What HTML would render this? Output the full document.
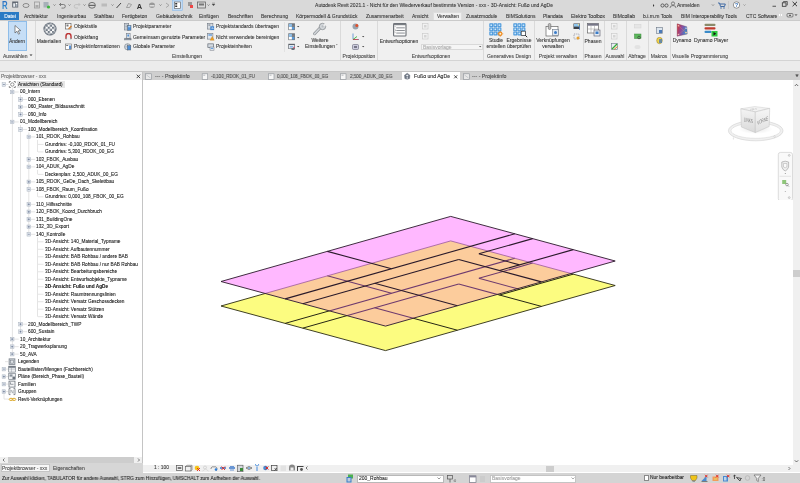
<!DOCTYPE html>
<html><head><meta charset="utf-8"><style>
html,body{margin:0;padding:0;width:800px;height:483px;overflow:hidden;background:#fff;position:relative}
.t{position:absolute;white-space:nowrap;font-family:"Liberation Sans",sans-serif;-webkit-text-stroke:0.08px currentColor;will-change:transform}
.r{position:absolute;display:block}
</style></head><body>
<div class="r" style="left:0px;top:0px;width:800px;height:20px;background:#d9d9d9;"></div>
<div class="r" style="left:0px;top:20px;width:800px;height:40px;background:#f0f0f0;"></div>
<div class="r" style="left:0px;top:19.5px;width:800px;height:0.5px;background:#cacaca;"></div>
<div class="r" style="left:0px;top:60px;width:800px;height:1px;background:#d4d4d4;"></div>
<div class="r" style="left:0px;top:61px;width:800px;height:10px;background:#ececec;"></div>
<div class="r" style="left:0px;top:71px;width:800px;height:1px;background:#c6c6c6;"></div>
<div class="t" style="left:283.50px;width:300px;text-align:center;top:3.17px;font-size:5px;line-height:5px;color:#333;">Autodesk Revit 2021.1 - Nicht für den Wiederverkauf bestimmte Version - xxx - 3D-Ansicht: Fußo und AgDe</div>
<div class="t" style="left:677.00px;top:3.17px;font-size:5px;line-height:5px;color:#333;">Anmelden</div>
<svg class="r" style="left:0px;top:-0.6px;" width="800" height="20" viewBox="0 0 800 20">
<defs><linearGradient id="rg" x1="0" y1="0" x2="0" y2="1"><stop offset="0" stop-color="#2a6cc0"/><stop offset="1" stop-color="#3a9ad8"/></linearGradient></defs><text x="0" y="0" font-family="Liberation Sans" font-weight="bold" font-size="10" fill="url(#rg)" transform="translate(2.1 9.9) scale(0.78 1.04)">R</text>
<rect x="12.2" y="2.5" width="6" height="6" fill="#5f6670"/><rect x="13.2" y="4.3" width="1.8" height="3.5" fill="#e8ecf0"/><rect x="15.5" y="4.3" width="2" height="3.5" fill="#aab2bb"/><circle cx="16.5" cy="4.5" r="0.8" fill="#fff"/>
<ellipse cx="26" cy="6.5" rx="3" ry="2" fill="none" stroke="#777" stroke-width="0.8"/>
<rect x="34.5" y="3" width="5" height="6" fill="none" stroke="#999" stroke-width="0.8"/><rect x="35.5" y="6" width="3" height="2.5" fill="#aaa"/>
<rect x="43.5" y="3" width="5" height="5.5" fill="#a7b0b8"/><circle cx="48.5" cy="8" r="1.6" fill="#3cb53c"/>
<path d="M53.5 5.5 l1 1 l1 -1" fill="none" stroke="#555" stroke-width="0.6"/>
<path d="M59.5 5.5 h4 a1.8 1.8 0 0 1 0 3.6 h-2 M59.5 5.5 l1.5 -1.5 M59.5 5.5 l1.5 1.5" fill="none" stroke="#666" stroke-width="0.8"/>
<path d="M68.5 5.5 l1 1 l1 -1" fill="none" stroke="#555" stroke-width="0.6"/>
<path d="M80 5.5 h-4 a1.8 1.8 0 0 0 0 3.6 h2 M80 5.5 l-1.5 -1.5 M80 5.5 l-1.5 1.5" fill="none" stroke="#bbb" stroke-width="0.8"/>
<path d="M83.5 5.5 l1 1 l1 -1" fill="none" stroke="#555" stroke-width="0.6"/>
<ellipse cx="92" cy="6.3" rx="3.4" ry="2.9" fill="none" stroke="#666" stroke-width="0.9"/><rect x="88.8" y="5.8" width="6.4" height="1.2" fill="#666"/>
<rect x="101.5" y="4.5" width="5.5" height="3" fill="#bbb"/>
<path d="M111.5 5.5 l1 1 l1 -1" fill="none" stroke="#555" stroke-width="0.6"/>
<path d="M116.5 9 l4.5 -5" stroke="#333" stroke-width="0.9"/>
<path d="M126.5 8.5 l2 -4 l3 1 l-2 3 z" fill="none" stroke="#888" stroke-width="0.7"/>
<text x="136.8" y="9.5" font-family="Liberation Sans" font-weight="bold" font-size="7.5" fill="#333">A</text>
<ellipse cx="152" cy="6.3" rx="3" ry="2.7" fill="#999"/><rect x="149.5" y="6" width="5" height="1.5" fill="#ddd"/>
<path d="M159.5 5.5 l1 1 l1 -1" fill="none" stroke="#555" stroke-width="0.6"/>
<path d="M166 4 l3 2.3 l-3 2.3" fill="none" stroke="#999" stroke-width="0.8"/>
<rect x="172.5" y="1" width="10" height="10.5" fill="#c3dcf5" stroke="#7eb4ea" stroke-width="0.5"/>
<rect x="174.5" y="3" width="6" height="6.5" fill="#fff" stroke="#555" stroke-width="0.6"/><rect x="175.2" y="4" width="2" height="1.5" fill="#333"/><rect x="175.2" y="6.5" width="2" height="1.5" fill="#333"/>
<rect x="188" y="3" width="4" height="4" fill="#999"/><rect x="190" y="6" width="3" height="3" fill="#e44"/>
<rect x="197.5" y="3" width="8" height="6" fill="none" stroke="#666" stroke-width="0.8"/><rect x="199" y="4.5" width="5" height="2" fill="#777"/>
<path d="M207.5 5.5 l1 1 l1 -1" fill="none" stroke="#555" stroke-width="0.6"/>
<path d="M212 5 h3 l-1.5 1.8 z M212 4 h3" fill="#444" stroke="#444" stroke-width="0.3"/>
<path d="M653 5 l1.3 1.5 l-1.3 1.5" fill="#333"/>
<circle cx="662.5" cy="6.5" r="1.6" fill="none" stroke="#444" stroke-width="0.8"/><circle cx="666.5" cy="6.5" r="1.6" fill="none" stroke="#444" stroke-width="0.8"/>
<circle cx="673" cy="4.5" r="1.6" fill="none" stroke="#555" stroke-width="0.7"/><path d="M670 9 a3 2.5 0 0 1 6 0" fill="none" stroke="#555" stroke-width="0.7"/>
<path d="M712 5.5 l1 1 l1 -1" fill="none" stroke="#555" stroke-width="0.6"/>
<path d="M718 4 h1.5 l1 3.5 h4 l0.8 -2.5 h-5.3" fill="none" stroke="#2f5e9e" stroke-width="0.9"/><circle cx="721" cy="9" r="0.7" fill="#2f5e9e"/><circle cx="724" cy="9" r="0.7" fill="#2f5e9e"/>
<rect x="728.5" y="2" width="0.5" height="8" fill="#bbb"/>
<circle cx="736.5" cy="6" r="3.2" fill="#fff" stroke="#555" stroke-width="0.6"/><text x="735" y="8" font-family="Liberation Sans" font-weight="bold" font-size="5" fill="#1f5fae">?</text>
<path d="M743.5 5.5 l1 1 l1 -1" fill="none" stroke="#777" stroke-width="0.6"/>
<rect x="772.5" y="6.8" width="3.5" height="0.8" fill="#333"/>
<rect x="782.3" y="3.8" width="3.7" height="3.5" fill="none" stroke="#333" stroke-width="0.8"/><path d="M783.5 3.3 v-0.8 h3.8 v3.6 h-0.8" fill="none" stroke="#333" stroke-width="0.7"/>
<path d="M792.6 2.8 l4.4 4.4 M797 2.8 l-4.4 4.4" stroke="#222" stroke-width="0.9"/>
<rect x="779" y="15" width="1" height="2" fill="#fff"/><rect x="781" y="15" width="1" height="2" fill="#fff"/>
<rect x="787" y="14.5" width="6" height="3.5" rx="1" fill="none" stroke="#444" stroke-width="0.6"/><rect x="789" y="15.8" width="2" height="1" fill="#444"/>
<path d="M795 15.5 l1 1 l1 -1" fill="#333" stroke="#333" stroke-width="0.5"/>
</svg>
<div class="r" style="left:0px;top:12px;width:19px;height:8px;background:#2a7ac4;"></div>
<div class="t" style="left:-140.50px;width:300px;text-align:center;top:13.97px;font-size:5px;line-height:5px;color:#fff;">Datei</div>
<div class="r" style="left:433px;top:11.8px;width:29px;height:8.7px;background:#f0f0f0;border:0.5px solid #dedede;border-bottom:none;box-sizing:border-box"></div>
<div class="t" style="left:24.00px;top:13.97px;font-size:5px;line-height:5px;color:#333;">Architektur</div>
<div class="t" style="left:57.00px;top:13.97px;font-size:5px;line-height:5px;color:#333;">Ingenieurbau</div>
<div class="t" style="left:94.00px;top:13.97px;font-size:5px;line-height:5px;color:#333;">Stahlbau</div>
<div class="t" style="left:122.00px;top:13.97px;font-size:5px;line-height:5px;color:#333;">Fertigbeton</div>
<div class="t" style="left:155.50px;top:13.97px;font-size:5px;line-height:5px;color:#333;">Gebäudetechnik</div>
<div class="t" style="left:199.00px;top:13.97px;font-size:5px;line-height:5px;color:#333;">Einfügen</div>
<div class="t" style="left:227.50px;top:13.97px;font-size:5px;line-height:5px;color:#333;">Beschriften</div>
<div class="t" style="left:260.50px;top:13.97px;font-size:5px;line-height:5px;color:#333;">Berechnung</div>
<div class="t" style="left:296.00px;top:13.97px;font-size:5px;line-height:5px;color:#333;">Körpermodell &amp; Grundstück</div>
<div class="t" style="left:366.00px;top:13.97px;font-size:5px;line-height:5px;color:#333;">Zusammenarbeit</div>
<div class="t" style="left:412.00px;top:13.97px;font-size:5px;line-height:5px;color:#333;">Ansicht</div>
<div class="t" style="left:437.00px;top:13.97px;font-size:5px;line-height:5px;color:#333;">Verwalten</div>
<div class="t" style="left:466.00px;top:13.97px;font-size:5px;line-height:5px;color:#333;">Zusatzmodule</div>
<div class="t" style="left:506.00px;top:13.97px;font-size:5px;line-height:5px;color:#333;">BIMSolutions</div>
<div class="t" style="left:543.00px;top:13.97px;font-size:5px;line-height:5px;color:#333;">Plandata</div>
<div class="t" style="left:571.00px;top:13.97px;font-size:5px;line-height:5px;color:#333;">Elektro Toolbox</div>
<div class="t" style="left:612.50px;top:13.97px;font-size:5px;line-height:5px;color:#333;">BIMcollab</div>
<div class="t" style="left:643.00px;top:13.97px;font-size:5px;line-height:5px;color:#333;">b.i.m.m Tools</div>
<div class="t" style="left:681.00px;top:13.97px;font-size:5px;line-height:5px;color:#333;">BIM Interoperability Tools</div>
<div class="t" style="left:745.50px;top:13.97px;font-size:5px;line-height:5px;color:#333;">CTC Software</div>
<div class="r" style="left:35px;top:21px;width:0.6px;height:39px;background:#dadada;"></div>
<div class="r" style="left:339.7px;top:21px;width:0.6px;height:39px;background:#dadada;"></div>
<div class="r" style="left:377px;top:21px;width:0.6px;height:39px;background:#dadada;"></div>
<div class="r" style="left:483px;top:21px;width:0.6px;height:39px;background:#dadada;"></div>
<div class="r" style="left:533.5px;top:21px;width:0.6px;height:39px;background:#dadada;"></div>
<div class="r" style="left:582.7px;top:21px;width:0.6px;height:39px;background:#dadada;"></div>
<div class="r" style="left:603.7px;top:21px;width:0.6px;height:39px;background:#dadada;"></div>
<div class="r" style="left:626px;top:21px;width:0.6px;height:39px;background:#dadada;"></div>
<div class="r" style="left:648px;top:21px;width:0.6px;height:39px;background:#dadada;"></div>
<div class="r" style="left:669.7px;top:21px;width:0.6px;height:39px;background:#dadada;"></div>
<div class="r" style="left:283.5px;top:22px;width:0.5px;height:30px;background:#e2e2e2;"></div>
<div class="r" style="left:8.2px;top:21.3px;width:18.5px;height:30px;background:#c6def6;border:0.5px solid #8fbde9;box-sizing:border-box"></div>
<svg class="r" style="left:14.3px;top:24.5px;" width="8" height="10" viewBox="0 0 8 10"><path d="M1 0.5 v7.5 l2 -1.8 l1.5 3 l1.2 -0.6 l-1.5 -2.8 l2.6 -0.2 z" fill="#fff" stroke="#444" stroke-width="0.6"/></svg>
<div class="t" style="left:-132.55px;width:300px;text-align:center;top:38.57px;font-size:5px;line-height:5px;color:#333;">Ändern</div>
<div class="t" style="left:2.50px;top:53.67px;font-size:5px;line-height:5px;color:#444;">Auswählen</div>
<svg class="r" style="left:29px;top:54px;" width="5" height="3" viewBox="0 0 5 3"><path d="M0.5 0.5 h3 l-1.5 1.6 z" fill="#333"/></svg>
<svg class="r" style="left:42.6px;top:22.1px;" width="14" height="14" viewBox="0 0 14 14"><defs><pattern id="chk" width="4.4" height="4.4" patternUnits="userSpaceOnUse" x="0.3" y="0.3"><rect width="4.4" height="4.4" fill="#ffffff"/><rect width="2.2" height="2.2" fill="#6a7480"/><rect x="2.2" y="2.2" width="2.2" height="2.2" fill="#6a7480"/></pattern><radialGradient id="sg" cx="0.5" cy="0.5" r="0.5"><stop offset="0.55" stop-color="#fff" stop-opacity="0"/><stop offset="1" stop-color="#4a5460" stop-opacity="0.75"/></radialGradient></defs><circle cx="7" cy="7" r="6.3" fill="url(#chk)"/><circle cx="7" cy="7" r="6.3" fill="url(#sg)"/><circle cx="7" cy="7" r="6.2" fill="none" stroke="#6a7480" stroke-width="0.5"/></svg>
<div class="t" style="left:-100.90px;width:300px;text-align:center;top:38.57px;font-size:5px;line-height:5px;color:#333;">Materialien</div>
<svg class="r" style="left:64.5px;top:22.7px;" width="8" height="8" viewBox="0 0 8 8"><rect x="0.5" y="0.5" width="5.5" height="5.5" fill="#fff" stroke="#555" stroke-width="0.6"/><rect x="1.5" y="1.5" width="2" height="2" fill="#777"/><path d="M3.5 6 l3 -3" stroke="#d27a2a" stroke-width="1.2"/></svg>
<div class="t" style="left:73.80px;top:24.37px;font-size:5px;line-height:5px;color:#333;">Objektstile</div>
<svg class="r" style="left:64.5px;top:32.9px;" width="8" height="8" viewBox="0 0 8 8"><path d="M1 6 v-3 a2.5 2.5 0 0 1 5 0 v3" fill="none" stroke="#b33" stroke-width="1.4"/><rect x="0.5" y="5" width="1.5" height="1.3" fill="#999"/><rect x="5" y="5" width="1.5" height="1.3" fill="#999"/></svg>
<div class="t" style="left:73.80px;top:34.57px;font-size:5px;line-height:5px;color:#333;">Objektfang</div>
<svg class="r" style="left:64.5px;top:42.7px;" width="8" height="8" viewBox="0 0 8 8"><rect x="0.5" y="1" width="6" height="5.5" fill="#fff" stroke="#666" stroke-width="0.6"/><rect x="1.2" y="2" width="2" height="1" fill="#777"/><rect x="4" y="2.5" width="2" height="3.5" fill="#5a8fd0"/></svg>
<div class="t" style="left:73.80px;top:44.37px;font-size:5px;line-height:5px;color:#333;">Projektinformationen</div>
<svg class="r" style="left:124.3px;top:22.7px;" width="8" height="8" viewBox="0 0 8 8"><rect x="0.5" y="0.5" width="4.2" height="6.5" fill="#d5dbe2" stroke="#6f7782" stroke-width="0.6"/><path d="M1.3 2 h2.6 M1.3 3.5 h2.6 M1.3 5 h2.6" stroke="#7a828c" stroke-width="0.5"/><rect x="3.6" y="2.5" width="3.4" height="4.8" fill="#4f8fd6" stroke="#55606c" stroke-width="0.5"/><rect x="4.3" y="3.2" width="2" height="1" fill="#c9e2fa"/></svg>
<div class="t" style="left:133.20px;top:24.37px;font-size:5px;line-height:5px;color:#333;">Projektparameter</div>
<svg class="r" style="left:124.3px;top:32.9px;" width="8" height="8" viewBox="0 0 8 8"><rect x="2.3" y="0.5" width="3.8" height="5" fill="#e3e8ee" stroke="#6f7782" stroke-width="0.6"/><rect x="3.4" y="1.5" width="1.6" height="2" fill="#4f8fd6"/><path d="M0.5 7.2 v-1.8 h6.6 v1.8" fill="#8a929c" stroke="#5a626c" stroke-width="0.5"/></svg>
<div class="t" style="left:133.20px;top:34.57px;font-size:5px;line-height:5px;color:#333;">Gemeinsam genutzte Parameter</div>
<svg class="r" style="left:124.3px;top:42.7px;" width="8" height="8" viewBox="0 0 8 8"><circle cx="3.6" cy="3.8" r="3.1" fill="#d5dbe2" stroke="#6f7782" stroke-width="0.6"/><path d="M0.6 3.8 h6 M3.6 0.7 v6.2" stroke="#8a929c" stroke-width="0.45"/><rect x="3.4" y="2.6" width="3.4" height="4.4" fill="#4f8fd6" stroke="#55606c" stroke-width="0.45"/></svg>
<div class="t" style="left:133.20px;top:44.37px;font-size:5px;line-height:5px;color:#333;">Globale  Parameter</div>
<svg class="r" style="left:207.2px;top:22.7px;" width="8" height="8" viewBox="0 0 8 8"><rect x="0.5" y="0.5" width="5.4" height="5.6" fill="#d5dbe2" stroke="#6f7782" stroke-width="0.6"/><rect x="1.4" y="1.4" width="2" height="1.3" fill="#8a929c"/><rect x="3.3" y="3.3" width="3.8" height="3.8" fill="#3f84d0"/><path d="M4.2 5.2 h2 M5.4 4.3 l0.9 0.9 l-0.9 0.9" stroke="#fff" stroke-width="0.5" fill="none"/></svg>
<div class="t" style="left:216.00px;top:24.37px;font-size:5px;line-height:5px;color:#333;">Projektstandards übertragen</div>
<svg class="r" style="left:207.2px;top:32.9px;" width="8" height="8" viewBox="0 0 8 8"><rect x="0.5" y="0.5" width="5.4" height="5.6" fill="#e3e8ee" stroke="#6f7782" stroke-width="0.6"/><rect x="1.4" y="1.4" width="3.6" height="1.2" fill="#4f8fd6"/><path d="M3.2 7.3 l2 -3.8 l2 3.8 z" fill="#f0a020" stroke="#b87010" stroke-width="0.3"/></svg>
<div class="t" style="left:216.00px;top:34.57px;font-size:5px;line-height:5px;color:#333;">Nicht verwendete bereinigen</div>
<svg class="r" style="left:207.2px;top:42.7px;" width="8" height="8" viewBox="0 0 8 8"><rect x="0.5" y="0.5" width="6.2" height="4.2" fill="#5f6772"/><rect x="1.2" y="1.2" width="4.8" height="2.8" fill="#d5dbe2"/><rect x="3" y="4" width="4" height="3.2" fill="#e3e8ee" stroke="#6f7782" stroke-width="0.5"/><rect x="3.8" y="4.8" width="2.4" height="1" fill="#4f8fd6"/></svg>
<div class="t" style="left:216.00px;top:44.37px;font-size:5px;line-height:5px;color:#333;">Projekteinheiten</div>
<div class="t" style="left:37.30px;width:300px;text-align:center;top:53.67px;font-size:5px;line-height:5px;color:#444;">Einstellungen</div>
<svg class="r" style="left:287.8px;top:22.7px;" width="8" height="8" viewBox="0 0 8 8"><rect x="0.3" y="0.3" width="6.6" height="6.8" fill="#6a7078"/><rect x="0.9" y="0.9" width="3" height="3" fill="#8fc0ea"/><rect x="4" y="1.6" width="2.3" height="2.3" fill="#7a8088"/><rect x="0.9" y="4" width="3" height="2.5" fill="#ffffff"/><rect x="4" y="4" width="2.3" height="2.5" fill="#5a9ad8"/></svg>
<svg class="r" style="left:297px;top:26.4px;" width="3" height="2" viewBox="0 0 3 2"><path d="M0 0 h2.4 l-1.2 1.3 z" fill="#444"/></svg>
<svg class="r" style="left:287.8px;top:32.9px;" width="8" height="8" viewBox="0 0 8 8"><rect x="0.3" y="0.3" width="6.6" height="6.8" fill="#6a7078"/><rect x="0.9" y="0.9" width="3" height="3" fill="#8fc0ea"/><rect x="4" y="1.6" width="2.3" height="2.3" fill="#7a8088"/><rect x="0.9" y="4" width="3" height="2.5" fill="#ffffff"/><rect x="4" y="4" width="2.3" height="2.5" fill="#5a9ad8"/></svg>
<svg class="r" style="left:297px;top:36.6px;" width="3" height="2" viewBox="0 0 3 2"><path d="M0 0 h2.4 l-1.2 1.3 z" fill="#444"/></svg>
<svg class="r" style="left:287.8px;top:42.7px;" width="8" height="8" viewBox="0 0 8 8"><rect x="0.3" y="0.8" width="6.6" height="5.2" fill="#5a6068"/><rect x="0.9" y="2" width="5.4" height="3.5" fill="#dfe6ee"/><rect x="2" y="3" width="3" height="1.5" fill="#8ab8e8"/><circle cx="6" cy="4.5" r="0.8" fill="#e04a6a"/><rect x="3.5" y="5" width="3" height="2" fill="#6a7078"/></svg>
<svg class="r" style="left:297px;top:46.400000000000006px;" width="3" height="2" viewBox="0 0 3 2"><path d="M0 0 h2.4 l-1.2 1.3 z" fill="#444"/></svg>
<svg class="r" style="left:308px;top:20px;" width="24" height="18" viewBox="0 0 24 18"><path d="M6.5 13.8 L13 7" stroke="#8a8e92" stroke-width="2.9" stroke-linecap="round"/><path d="M6.5 13.8 L13 7" stroke="#d4d8dc" stroke-width="1.6" stroke-linecap="round"/><circle cx="14.5" cy="6.5" r="3.2" fill="#d4d8dc" stroke="#8a8e92" stroke-width="0.8"/><path d="M14.5 6.5 L17.2 2.8 L19 5.2 Z" fill="#f0f0f0"/><circle cx="14.6" cy="6.4" r="1.1" fill="#b8bcc0"/></svg>
<div class="t" style="left:170.00px;width:300px;text-align:center;top:38.37px;font-size:5px;line-height:5px;color:#333;">Weitere</div>
<div class="t" style="left:169.80px;width:300px;text-align:center;top:44.37px;font-size:5px;line-height:5px;color:#333;">Einstellungen</div>
<svg class="r" style="left:335.5px;top:43.5px;" width="2" height="2" viewBox="0 0 2 2"><path d="M0 0.3 h1.6 l-0.8 0.9 z" fill="#555"/></svg>
<svg class="r" style="left:352.3px;top:22.7px;" width="8" height="8" viewBox="0 0 8 8"><circle cx="3.5" cy="3.5" r="3" fill="#9aa3ad"/><circle cx="4.8" cy="2.5" r="1.5" fill="#e0502a"/></svg>
<svg class="r" style="left:352.3px;top:32.9px;" width="8" height="8" viewBox="0 0 8 8"><path d="M1 0.5 v6 h6" fill="none" stroke="#3a7cc8" stroke-width="0.7"/><path d="M1 6.5 l4 -3" stroke="#2a2" stroke-width="0.8"/><path d="M1 6.5 h5.5" stroke="#d33" stroke-width="0.7"/></svg>
<svg class="r" style="left:352.3px;top:42.7px;" width="8" height="8" viewBox="0 0 8 8"><rect x="0.5" y="1.5" width="6" height="5" rx="1" fill="#ccd" stroke="#667" stroke-width="0.6"/><rect x="2" y="3" width="3" height="2" fill="#778"/></svg>
<svg class="r" style="left:362px;top:35.8px;" width="3" height="2" viewBox="0 0 3 2"><path d="M0 0 h2.4 l-1.2 1.3 z" fill="#444"/></svg>
<svg class="r" style="left:362px;top:45.8px;" width="3" height="2" viewBox="0 0 3 2"><path d="M0 0 h2.4 l-1.2 1.3 z" fill="#444"/></svg>
<div class="t" style="left:208.50px;width:300px;text-align:center;top:53.67px;font-size:5px;line-height:5px;color:#444;">Projektposition</div>
<svg class="r" style="left:392.5px;top:22.6px;" width="14" height="14" viewBox="0 0 14 14"><rect x="0.6" y="0.6" width="12.4" height="12.4" rx="0.8" fill="#fbfbfb" stroke="#6a6e74" stroke-width="1.1"/><rect x="0.6" y="0.6" width="12.4" height="1.6" fill="#7a7e84"/><rect x="3.3" y="4.4" width="8.5" height="0.9" fill="#80848a"/><rect x="3.3" y="7" width="8.5" height="0.9" fill="#80848a"/><rect x="3.3" y="9.6" width="8.5" height="0.9" fill="#80848a"/><path d="M1.6 3.6 h1 M1.6 6.2 l1.2 1 l-1.2 1 M1.6 9.4 h1" stroke="#777" stroke-width="0.5" fill="none"/></svg>
<div class="t" style="left:249.40px;width:300px;text-align:center;top:38.57px;font-size:5px;line-height:5px;color:#333;">Entwurfsoptionen</div>
<svg class="r" style="left:421.7px;top:22.7px;" width="8" height="8" viewBox="0 0 8 8"><rect x="0.5" y="0.5" width="5.5" height="5.5" fill="#f2f2f2" stroke="#c8c8c8" stroke-width="0.6"/><rect x="2" y="2" width="2.5" height="2.5" fill="#d5d5d5"/></svg>
<svg class="r" style="left:421.7px;top:32.9px;" width="8" height="8" viewBox="0 0 8 8"><rect x="0.5" y="0.5" width="5.5" height="5.5" fill="#f2f2f2" stroke="#c8c8c8" stroke-width="0.6"/><rect x="2" y="2" width="2.5" height="2.5" fill="#d5d5d5"/></svg>
<div class="r" style="left:421px;top:43.5px;width:61.5px;height:6.5px;background:#f5f5f5;border:0.5px solid #d9d9d9;box-sizing:border-box"></div>
<div class="t" style="left:422.50px;top:44.87px;font-size:5px;line-height:5px;color:#aaa;">Basisvorlage</div>
<svg class="r" style="left:479px;top:46px;" width="3" height="2" viewBox="0 0 3 2"><path d="M0 0 h2.4 l-1.2 1.3 z" fill="#555"/></svg>
<div class="t" style="left:280.50px;width:300px;text-align:center;top:53.67px;font-size:5px;line-height:5px;color:#444;">Entwurfsoptionen</div>
<svg class="r" style="left:488.5px;top:22.7px;" width="16" height="15" viewBox="0 0 16 15"><rect x="0.30" y="0.30" width="3.9" height="3.9" rx="0.6" fill="#4a98dc"/><rect x="1.40" y="1.40" width="1.7" height="1.7" fill="#c8e6fb"/><rect x="4.40" y="0.30" width="3.9" height="3.9" rx="0.6" fill="#4a98dc"/><rect x="5.50" y="1.40" width="1.7" height="1.7" fill="#c8e6fb"/><rect x="8.50" y="0.30" width="3.9" height="3.9" rx="0.6" fill="#4a98dc"/><rect x="9.60" y="1.40" width="1.7" height="1.7" fill="#c8e6fb"/><rect x="0.30" y="4.40" width="3.9" height="3.9" rx="0.6" fill="#4a98dc"/><rect x="1.40" y="5.50" width="1.7" height="1.7" fill="#c8e6fb"/><rect x="4.40" y="4.40" width="3.9" height="3.9" rx="0.6" fill="#4a98dc"/><rect x="5.50" y="5.50" width="1.7" height="1.7" fill="#c8e6fb"/><rect x="8.50" y="4.40" width="3.9" height="3.9" rx="0.6" fill="#4a98dc"/><rect x="9.60" y="5.50" width="1.7" height="1.7" fill="#c8e6fb"/><rect x="0.30" y="8.50" width="3.9" height="3.9" rx="0.6" fill="#4a98dc"/><rect x="1.40" y="9.60" width="1.7" height="1.7" fill="#c8e6fb"/><rect x="4.40" y="8.50" width="3.9" height="3.9" rx="0.6" fill="#4a98dc"/><rect x="5.50" y="9.60" width="1.7" height="1.7" fill="#c8e6fb"/><rect x="8.50" y="8.50" width="3.9" height="3.9" rx="0.6" fill="#4a98dc"/><rect x="9.60" y="9.60" width="1.7" height="1.7" fill="#c8e6fb"/><circle cx="11.3" cy="10.8" r="2.2" fill="#f08a1e"/><circle cx="11.3" cy="10.8" r="1" fill="#fff3d0"/><path d="M11.3 7.8 v1 M11.3 12.8 v1 M8.3 10.8 h1 M13.3 10.8 h1" stroke="#f08a1e" stroke-width="0.7"/></svg>
<svg class="r" style="left:513.3px;top:22.7px;" width="16" height="15" viewBox="0 0 16 15"><rect x="0.30" y="0.30" width="3.9" height="3.9" rx="0.6" fill="#4a98dc"/><rect x="1.40" y="1.40" width="1.7" height="1.7" fill="#c8e6fb"/><rect x="4.40" y="0.30" width="3.9" height="3.9" rx="0.6" fill="#4a98dc"/><rect x="5.50" y="1.40" width="1.7" height="1.7" fill="#c8e6fb"/><rect x="8.50" y="0.30" width="3.9" height="3.9" rx="0.6" fill="#4a98dc"/><rect x="9.60" y="1.40" width="1.7" height="1.7" fill="#c8e6fb"/><rect x="0.30" y="4.40" width="3.9" height="3.9" rx="0.6" fill="#4a98dc"/><rect x="1.40" y="5.50" width="1.7" height="1.7" fill="#c8e6fb"/><rect x="4.40" y="4.40" width="3.9" height="3.9" rx="0.6" fill="#4a98dc"/><rect x="5.50" y="5.50" width="1.7" height="1.7" fill="#c8e6fb"/><rect x="8.50" y="4.40" width="3.9" height="3.9" rx="0.6" fill="#4a98dc"/><rect x="9.60" y="5.50" width="1.7" height="1.7" fill="#c8e6fb"/><rect x="0.30" y="8.50" width="3.9" height="3.9" rx="0.6" fill="#4a98dc"/><rect x="1.40" y="9.60" width="1.7" height="1.7" fill="#c8e6fb"/><rect x="4.40" y="8.50" width="3.9" height="3.9" rx="0.6" fill="#4a98dc"/><rect x="5.50" y="9.60" width="1.7" height="1.7" fill="#c8e6fb"/><rect x="8.50" y="8.50" width="3.9" height="3.9" rx="0.6" fill="#4a98dc"/><rect x="9.60" y="9.60" width="1.7" height="1.7" fill="#c8e6fb"/><rect x="8.2" y="8.2" width="4.2" height="4.2" fill="#fff" stroke="#333" stroke-width="0.7"/><path d="M12.2 12.2 l2 2" stroke="#222" stroke-width="1"/></svg>
<div class="t" style="left:345.50px;width:300px;text-align:center;top:38.37px;font-size:5px;line-height:5px;color:#333;">Studie</div>
<div class="t" style="left:345.50px;width:300px;text-align:center;top:44.37px;font-size:5px;line-height:5px;color:#333;">erstellen</div>
<div class="t" style="left:369.30px;width:300px;text-align:center;top:38.37px;font-size:5px;line-height:5px;color:#333;">Ergebnisse</div>
<div class="t" style="left:369.30px;width:300px;text-align:center;top:44.37px;font-size:5px;line-height:5px;color:#333;">überprüfen</div>
<div class="t" style="left:359.00px;width:300px;text-align:center;top:53.67px;font-size:5px;line-height:5px;color:#444;">Generatives Design</div>
<svg class="r" style="left:545px;top:22.5px;" width="16" height="14" viewBox="0 0 16 14"><rect x="1" y="3.5" width="12" height="9.5" fill="#fff" stroke="#666" stroke-width="0.7"/><rect x="3.3" y="0.5" width="2.5" height="6" rx="1.2" fill="#bbb" stroke="#666" stroke-width="0.6"/><rect x="7.5" y="6.5" width="6" height="6" fill="#e0e8f0" stroke="#6b7785" stroke-width="0.6"/><circle cx="10.5" cy="9.5" r="1.5" fill="#3a7cc8"/></svg>
<div class="t" style="left:402.80px;width:300px;text-align:center;top:38.37px;font-size:5px;line-height:5px;color:#333;">Verknüpfungen</div>
<div class="t" style="left:402.80px;width:300px;text-align:center;top:44.37px;font-size:5px;line-height:5px;color:#333;">verwalten</div>
<svg class="r" style="left:572.8px;top:22.7px;" width="8" height="8" viewBox="0 0 8 8"><rect x="0.5" y="0.5" width="6.5" height="5.5" fill="#3a4048"/><rect x="1" y="1" width="5.5" height="2.6" fill="#8fc6ee"/><circle cx="5.5" cy="1.8" r="0.7" fill="#f5e27a"/><path d="M6.5 3 v4" stroke="#5a8ac8" stroke-width="0.8"/></svg>
<svg class="r" style="left:572.8px;top:32.9px;" width="8" height="8" viewBox="0 0 8 8"><rect x="1" y="1" width="5" height="5" fill="none" stroke="#778" stroke-width="0.6" stroke-dasharray="1 0.8"/><circle cx="5" cy="5" r="1.5" fill="#e8a030"/></svg>
<div class="t" style="left:407.60px;width:300px;text-align:center;top:53.67px;font-size:5px;line-height:5px;color:#444;">Projekt verwalten</div>
<svg class="r" style="left:586.5px;top:22.5px;" width="14" height="14" viewBox="0 0 14 14"><rect x="0.5" y="0.5" width="11" height="9.5" fill="#fff" stroke="#666" stroke-width="0.7"/><rect x="0.5" y="0.5" width="11" height="2.2" fill="#778"/><path d="M4 2.7 v7.3 M7.5 2.7 v7.3 M0.5 6 h11" stroke="#999" stroke-width="0.5"/><rect x="7" y="7" width="6" height="6" fill="#e6edf4" stroke="#556" stroke-width="0.6"/><rect x="8.5" y="8.5" width="3" height="2.5" fill="#3a7cc8"/></svg>
<div class="t" style="left:442.80px;width:300px;text-align:center;top:38.57px;font-size:5px;line-height:5px;color:#333;">Phasen</div>
<div class="t" style="left:443.00px;width:300px;text-align:center;top:53.67px;font-size:5px;line-height:5px;color:#444;">Phasen</div>
<svg class="r" style="left:610.8px;top:22.7px;" width="8" height="8" viewBox="0 0 8 8"><rect x="0.5" y="0.5" width="5.5" height="5.5" fill="#f2f2f2" stroke="#c8c8c8" stroke-width="0.6"/><rect x="2" y="2" width="2.5" height="2.5" fill="#d5d5d5"/></svg>
<svg class="r" style="left:610.8px;top:32.9px;" width="8" height="8" viewBox="0 0 8 8"><rect x="0.5" y="0.5" width="5.5" height="5.5" fill="#f2f2f2" stroke="#c8c8c8" stroke-width="0.6"/><rect x="2" y="2" width="2.5" height="2.5" fill="#d5d5d5"/></svg>
<svg class="r" style="left:610.8px;top:42.7px;" width="8" height="8" viewBox="0 0 8 8"><rect x="0.5" y="0.5" width="6" height="6" fill="#e9eef3" stroke="#6b7785" stroke-width="0.6"/><path d="M1 6 l5 -5" stroke="#3a3" stroke-width="1.2"/><path d="M3 6.5 l3.5 -3" stroke="#e08a20" stroke-width="1"/></svg>
<div class="t" style="left:464.70px;width:300px;text-align:center;top:53.67px;font-size:5px;line-height:5px;color:#444;">Auswahl</div>
<svg class="r" style="left:633.7px;top:22.7px;" width="8" height="8" viewBox="0 0 8 8"><rect x="0.5" y="1.5" width="6.5" height="3.5" fill="#e6e6e6" stroke="#d2d2d2" stroke-width="0.5"/></svg>
<svg class="r" style="left:633.7px;top:32.9px;" width="8" height="8" viewBox="0 0 8 8"><rect x="0.5" y="1" width="6.5" height="4.5" fill="#5cb85c" stroke="#3a8a3a" stroke-width="0.5"/><circle cx="5" cy="4.5" r="1.3" fill="none" stroke="#333" stroke-width="0.6"/></svg>
<svg class="r" style="left:633.7px;top:42.7px;" width="8" height="8" viewBox="0 0 8 8"><ellipse cx="3.5" cy="4" rx="3" ry="2" fill="#e2e2e2"/></svg>
<div class="t" style="left:487.40px;width:300px;text-align:center;top:53.67px;font-size:5px;line-height:5px;color:#444;">Abfrage</div>
<svg class="r" style="left:655.7px;top:27.0px;" width="8" height="8" viewBox="0 0 8 8"><rect x="0.5" y="0.5" width="6" height="6" fill="#dde6ef" stroke="#6b7785" stroke-width="0.6"/><rect x="3" y="3" width="3" height="3" fill="#4a7ab8"/></svg>
<svg class="r" style="left:655.7px;top:37.0px;" width="8" height="8" viewBox="0 0 8 8"><ellipse cx="3.5" cy="3.5" rx="2.8" ry="3.2" fill="#f3d34a" stroke="#8a7a2a" stroke-width="0.5"/><rect x="3" y="2" width="3" height="4" fill="#4a7ab8" opacity="0.8"/></svg>
<div class="t" style="left:508.80px;width:300px;text-align:center;top:53.67px;font-size:5px;line-height:5px;color:#444;">Makros</div>
<svg class="r" style="left:676px;top:22.5px;" width="13" height="14" viewBox="0 0 13 14"><defs><linearGradient id="dyn" x1="0" y1="0" x2="1" y2="0.3"><stop offset="0" stop-color="#d8332a"/><stop offset="0.5" stop-color="#8e4a9e"/><stop offset="1" stop-color="#3a8ad0"/></linearGradient></defs><path d="M1.2 0.8 L10.8 3.8 L11.2 11 L1.2 13.2 Z" fill="url(#dyn)"/><path d="M1.2 0.8 L10.8 3.8 L11.2 11 L1.2 13.2 Z" fill="none" stroke="#7a3a5a" stroke-width="0.4"/><circle cx="2.5" cy="2.8" r="0.8" fill="#f4c0b8"/><circle cx="2.5" cy="11.5" r="0.8" fill="#f4c0b8"/><circle cx="10" cy="5.2" r="0.8" fill="#c8e0f8"/><circle cx="10" cy="9.6" r="0.9" fill="#f0e0a0"/><path d="M2.5 11.5 L10 5.2 M2.5 2.8 L10 9.6" stroke="#e8a060" stroke-width="0.4" opacity="0.7"/></svg>
<div class="t" style="left:531.80px;width:300px;text-align:center;top:38.37px;font-size:5px;line-height:5px;color:#333;">Dynamo</div>
<svg class="r" style="left:703.5px;top:22.5px;" width="15" height="14" viewBox="0 0 15 14"><rect x="0.5" y="0.8" width="11" height="2.2" rx="1" fill="#8a8a6a"/><rect x="0.5" y="4.3" width="11" height="2.2" rx="1" fill="#c0392b"/><rect x="0.5" y="7.8" width="7" height="2.2" rx="1" fill="#3a8ac8"/><rect x="7.5" y="8" width="6" height="5.5" fill="#2ecc40"/><path d="M9.5 9 v3.5 l2.7 -1.75 z" fill="#111"/></svg>
<div class="t" style="left:560.50px;width:300px;text-align:center;top:38.37px;font-size:5px;line-height:5px;color:#333;">Dynamo Player</div>
<div class="t" style="left:550.30px;width:300px;text-align:center;top:53.67px;font-size:5px;line-height:5px;color:#444;">Visuelle Programmierung</div>
<div class="r" style="left:0px;top:72px;width:142px;height:8px;background:#f0f0f0;"></div>
<div class="t" style="left:1.20px;top:74.07px;font-size:5px;line-height:5px;color:#666;">Projektbrowser - xxx</div>
<svg class="r" style="left:135.5px;top:73.5px;" width="5" height="5" viewBox="0 0 5 5"><path d="M0.7 0.7 l3.4 3.4 M4.1 0.7 l-3.4 3.4" stroke="#222" stroke-width="0.8"/></svg>
<div class="r" style="left:0px;top:80px;width:142px;height:377px;background:#ffffff;"></div>
<div class="r" style="left:142px;top:72px;width:1px;height:400px;background:#c4c4c4;"></div>
<div class="r" style="left:17px;top:81.3px;width:47.5px;height:6.3px;background:#e6e6e6;"></div>
<div class="t" style="left:18.00px;top:82.98px;font-size:4.75px;line-height:4.75px;color:#151515;">Ansichten (Standard)</div>
<div class="t" style="left:19.70px;top:90.47px;font-size:4.75px;line-height:4.75px;color:#151515;">00_Intern</div>
<div class="t" style="left:28.00px;top:97.96px;font-size:4.75px;line-height:4.75px;color:#151515;">000_Ebenen</div>
<div class="t" style="left:28.00px;top:105.45px;font-size:4.75px;line-height:4.75px;color:#151515;">060_Raster_Bildausschnitt</div>
<div class="t" style="left:28.00px;top:112.94px;font-size:4.75px;line-height:4.75px;color:#151515;">090_Info</div>
<div class="t" style="left:19.70px;top:120.43px;font-size:4.75px;line-height:4.75px;color:#151515;">01_Modellbereich</div>
<div class="t" style="left:28.00px;top:127.92px;font-size:4.75px;line-height:4.75px;color:#151515;">100_Modellbereich_Koordination</div>
<div class="t" style="left:36.20px;top:135.41px;font-size:4.75px;line-height:4.75px;color:#151515;">101_RDOK_Rohbau</div>
<div class="t" style="left:44.50px;top:142.90px;font-size:4.75px;line-height:4.75px;color:#151515;">Grundriss: -0,100_RDOK_01_FU</div>
<div class="t" style="left:44.50px;top:150.39px;font-size:4.75px;line-height:4.75px;color:#151515;">Grundriss: 5,300_RDOK_00_EG</div>
<div class="t" style="left:36.20px;top:157.88px;font-size:4.75px;line-height:4.75px;color:#151515;">103_FBOK_Ausbau</div>
<div class="t" style="left:36.20px;top:165.37px;font-size:4.75px;line-height:4.75px;color:#151515;">104_ADUK_AgDe</div>
<div class="t" style="left:44.50px;top:172.86px;font-size:4.75px;line-height:4.75px;color:#151515;">Deckenplan: 2,500_ADUK_00_EG</div>
<div class="t" style="left:36.20px;top:180.35px;font-size:4.75px;line-height:4.75px;color:#151515;">105_RDOK_GeDe_Dach_Skelettbau</div>
<div class="t" style="left:36.20px;top:187.84px;font-size:4.75px;line-height:4.75px;color:#151515;">108_FBOK_Raum_Fußo</div>
<div class="t" style="left:44.50px;top:195.33px;font-size:4.75px;line-height:4.75px;color:#151515;">Grundriss: 0,000_108_FBOK_00_EG</div>
<div class="t" style="left:36.20px;top:202.82px;font-size:4.75px;line-height:4.75px;color:#151515;">110_Hilfsschnitte</div>
<div class="t" style="left:36.20px;top:210.31px;font-size:4.75px;line-height:4.75px;color:#151515;">120_FBOK_Koord_Durchbruch</div>
<div class="t" style="left:36.20px;top:217.80px;font-size:4.75px;line-height:4.75px;color:#151515;">131_BuildingOne</div>
<div class="t" style="left:36.20px;top:225.29px;font-size:4.75px;line-height:4.75px;color:#151515;">132_3D_Export</div>
<div class="t" style="left:36.20px;top:232.78px;font-size:4.75px;line-height:4.75px;color:#151515;">140_Kontrolle</div>
<div class="t" style="left:44.50px;top:240.27px;font-size:4.75px;line-height:4.75px;color:#151515;">3D-Ansicht: 140_Material_Typname</div>
<div class="t" style="left:44.50px;top:247.76px;font-size:4.75px;line-height:4.75px;color:#151515;">3D-Ansicht: Aufbautennummer</div>
<div class="t" style="left:44.50px;top:255.25px;font-size:4.75px;line-height:4.75px;color:#151515;">3D-Ansicht: BAB Rohbau / andere BAB</div>
<div class="t" style="left:44.50px;top:262.74px;font-size:4.75px;line-height:4.75px;color:#151515;">3D-Ansicht: BAB Rohbau / nur BAB Rohbau</div>
<div class="t" style="left:44.50px;top:270.23px;font-size:4.75px;line-height:4.75px;color:#151515;">3D-Ansicht: Bearbeitungsbereiche</div>
<div class="t" style="left:44.50px;top:277.72px;font-size:4.75px;line-height:4.75px;color:#151515;">3D-Ansicht: Entwurfsobjekte_Typname</div>
<div class="t" style="left:44.50px;top:285.21px;font-size:4.75px;line-height:4.75px;color:#151515;font-weight:bold;">3D-Ansicht: Fußo und AgDe</div>
<div class="t" style="left:44.50px;top:292.70px;font-size:4.75px;line-height:4.75px;color:#151515;">3D-Ansicht: Raumtrennungslinien</div>
<div class="t" style="left:44.50px;top:300.19px;font-size:4.75px;line-height:4.75px;color:#151515;">3D-Ansicht: Versatz Geschossdecken</div>
<div class="t" style="left:44.50px;top:307.68px;font-size:4.75px;line-height:4.75px;color:#151515;">3D-Ansicht: Versatz Stützen</div>
<div class="t" style="left:44.50px;top:315.17px;font-size:4.75px;line-height:4.75px;color:#151515;">3D-Ansicht: Versatz Wände</div>
<div class="t" style="left:28.00px;top:322.66px;font-size:4.75px;line-height:4.75px;color:#151515;">200_Modellbereich_TWP</div>
<div class="t" style="left:28.00px;top:330.15px;font-size:4.75px;line-height:4.75px;color:#151515;">600_Sustain</div>
<div class="t" style="left:19.70px;top:337.64px;font-size:4.75px;line-height:4.75px;color:#151515;">10_Architektur</div>
<div class="t" style="left:19.70px;top:345.13px;font-size:4.75px;line-height:4.75px;color:#151515;">20_Tragwerksplanung</div>
<div class="t" style="left:19.70px;top:352.62px;font-size:4.75px;line-height:4.75px;color:#151515;">50_AVA</div>
<div class="t" style="left:18.00px;top:360.11px;font-size:4.75px;line-height:4.75px;color:#151515;">Legenden</div>
<div class="t" style="left:18.00px;top:367.60px;font-size:4.75px;line-height:4.75px;color:#151515;">Bauteillisten/Mengen (Fachbereich)</div>
<div class="t" style="left:18.00px;top:375.09px;font-size:4.75px;line-height:4.75px;color:#151515;">Pläne (Bereich_Phase_Bauteil)</div>
<div class="t" style="left:18.00px;top:382.58px;font-size:4.75px;line-height:4.75px;color:#151515;">Familien</div>
<div class="t" style="left:18.00px;top:390.07px;font-size:4.75px;line-height:4.75px;color:#151515;">Gruppen</div>
<div class="t" style="left:18.00px;top:397.56px;font-size:4.75px;line-height:4.75px;color:#151515;">Revit-Verknüpfungen</div>
<svg class="r" style="left:0px;top:0px;" width="142" height="460" viewBox="0 0 142 460"><line x1="12.4" y1="87.5" x2="12.4" y2="354.14" stroke="#c8c8c8" stroke-width="0.5"/><line x1="20.5" y1="94.99" x2="20.5" y2="114.46000000000001" stroke="#c8c8c8" stroke-width="0.5"/><line x1="20.5" y1="124.95" x2="20.5" y2="331.67" stroke="#c8c8c8" stroke-width="0.5"/><line x1="28.8" y1="132.44" x2="28.8" y2="234.3" stroke="#c8c8c8" stroke-width="0.5"/><line x1="37.5" y1="139.93" x2="37.5" y2="151.91" stroke="#c8c8c8" stroke-width="0.5"/><line x1="37.5" y1="169.89" x2="37.5" y2="174.38" stroke="#c8c8c8" stroke-width="0.5"/><line x1="37.5" y1="192.36" x2="37.5" y2="196.85000000000002" stroke="#c8c8c8" stroke-width="0.5"/><line x1="37.5" y1="237.3" x2="37.5" y2="316.69" stroke="#c8c8c8" stroke-width="0.5"/><rect x="2.0999999999999996" y="82.7" width="3.6" height="3.6" fill="#e2e7ee" stroke="#a4aeba" stroke-width="0.45"/><line x1="2.9" y1="84.5" x2="4.9" y2="84.5" stroke="#4a5a7a" stroke-width="0.5"/><line x1="5.9" y1="84.5" x2="8.5" y2="84.5" stroke="#c8c8c8" stroke-width="0.5"/><path d="M9.3 83.0 v-1.5 h1.5 M13.8 81.5 h1.5 v1.5 M15.3 86.0 v1.5 h-1.5 M10.8 87.5 h-1.5 v-1.5" fill="none" stroke="#444" stroke-width="0.6"/><circle cx="12.3" cy="84.5" r="1.7" fill="none" stroke="#555" stroke-width="0.6"/><rect x="10.399999999999999" y="90.19" width="3.6" height="3.6" fill="#e2e7ee" stroke="#a4aeba" stroke-width="0.45"/><line x1="11.2" y1="91.99" x2="13.2" y2="91.99" stroke="#4a5a7a" stroke-width="0.5"/><line x1="14.2" y1="91.99" x2="18.7" y2="91.99" stroke="#c8c8c8" stroke-width="0.5"/><rect x="18.7" y="97.68" width="3.6" height="3.6" fill="#e2e7ee" stroke="#a4aeba" stroke-width="0.45"/><line x1="19.5" y1="99.48" x2="21.5" y2="99.48" stroke="#4a5a7a" stroke-width="0.5"/><line x1="20.5" y1="98.48" x2="20.5" y2="100.48" stroke="#4a5a7a" stroke-width="0.5"/><line x1="22.5" y1="99.48" x2="27.0" y2="99.48" stroke="#c8c8c8" stroke-width="0.5"/><rect x="18.7" y="105.17" width="3.6" height="3.6" fill="#e2e7ee" stroke="#a4aeba" stroke-width="0.45"/><line x1="19.5" y1="106.97" x2="21.5" y2="106.97" stroke="#4a5a7a" stroke-width="0.5"/><line x1="20.5" y1="105.97" x2="20.5" y2="107.97" stroke="#4a5a7a" stroke-width="0.5"/><line x1="22.5" y1="106.97" x2="27.0" y2="106.97" stroke="#c8c8c8" stroke-width="0.5"/><rect x="18.7" y="112.66000000000001" width="3.6" height="3.6" fill="#e2e7ee" stroke="#a4aeba" stroke-width="0.45"/><line x1="19.5" y1="114.46000000000001" x2="21.5" y2="114.46000000000001" stroke="#4a5a7a" stroke-width="0.5"/><line x1="20.5" y1="113.46000000000001" x2="20.5" y2="115.46000000000001" stroke="#4a5a7a" stroke-width="0.5"/><line x1="22.5" y1="114.46000000000001" x2="27.0" y2="114.46000000000001" stroke="#c8c8c8" stroke-width="0.5"/><rect x="10.399999999999999" y="120.15" width="3.6" height="3.6" fill="#e2e7ee" stroke="#a4aeba" stroke-width="0.45"/><line x1="11.2" y1="121.95" x2="13.2" y2="121.95" stroke="#4a5a7a" stroke-width="0.5"/><line x1="14.2" y1="121.95" x2="18.7" y2="121.95" stroke="#c8c8c8" stroke-width="0.5"/><rect x="18.7" y="127.64" width="3.6" height="3.6" fill="#e2e7ee" stroke="#a4aeba" stroke-width="0.45"/><line x1="19.5" y1="129.44" x2="21.5" y2="129.44" stroke="#4a5a7a" stroke-width="0.5"/><line x1="22.5" y1="129.44" x2="27.0" y2="129.44" stroke="#c8c8c8" stroke-width="0.5"/><rect x="27.0" y="135.13" width="3.6" height="3.6" fill="#e2e7ee" stroke="#a4aeba" stroke-width="0.45"/><line x1="27.8" y1="136.93" x2="29.8" y2="136.93" stroke="#4a5a7a" stroke-width="0.5"/><line x1="30.8" y1="136.93" x2="35.2" y2="136.93" stroke="#c8c8c8" stroke-width="0.5"/><line x1="38" y1="144.42000000000002" x2="43.5" y2="144.42000000000002" stroke="#c8c8c8" stroke-width="0.5"/><line x1="38" y1="151.91" x2="43.5" y2="151.91" stroke="#c8c8c8" stroke-width="0.5"/><rect x="27.0" y="157.6" width="3.6" height="3.6" fill="#e2e7ee" stroke="#a4aeba" stroke-width="0.45"/><line x1="27.8" y1="159.4" x2="29.8" y2="159.4" stroke="#4a5a7a" stroke-width="0.5"/><line x1="28.8" y1="158.4" x2="28.8" y2="160.4" stroke="#4a5a7a" stroke-width="0.5"/><line x1="30.8" y1="159.4" x2="35.2" y2="159.4" stroke="#c8c8c8" stroke-width="0.5"/><rect x="27.0" y="165.08999999999997" width="3.6" height="3.6" fill="#e2e7ee" stroke="#a4aeba" stroke-width="0.45"/><line x1="27.8" y1="166.89" x2="29.8" y2="166.89" stroke="#4a5a7a" stroke-width="0.5"/><line x1="30.8" y1="166.89" x2="35.2" y2="166.89" stroke="#c8c8c8" stroke-width="0.5"/><line x1="38" y1="174.38" x2="43.5" y2="174.38" stroke="#c8c8c8" stroke-width="0.5"/><rect x="27.0" y="180.07" width="3.6" height="3.6" fill="#e2e7ee" stroke="#a4aeba" stroke-width="0.45"/><line x1="27.8" y1="181.87" x2="29.8" y2="181.87" stroke="#4a5a7a" stroke-width="0.5"/><line x1="28.8" y1="180.87" x2="28.8" y2="182.87" stroke="#4a5a7a" stroke-width="0.5"/><line x1="30.8" y1="181.87" x2="35.2" y2="181.87" stroke="#c8c8c8" stroke-width="0.5"/><rect x="27.0" y="187.56" width="3.6" height="3.6" fill="#e2e7ee" stroke="#a4aeba" stroke-width="0.45"/><line x1="27.8" y1="189.36" x2="29.8" y2="189.36" stroke="#4a5a7a" stroke-width="0.5"/><line x1="30.8" y1="189.36" x2="35.2" y2="189.36" stroke="#c8c8c8" stroke-width="0.5"/><line x1="38" y1="196.85000000000002" x2="43.5" y2="196.85000000000002" stroke="#c8c8c8" stroke-width="0.5"/><rect x="27.0" y="202.54" width="3.6" height="3.6" fill="#e2e7ee" stroke="#a4aeba" stroke-width="0.45"/><line x1="27.8" y1="204.34" x2="29.8" y2="204.34" stroke="#4a5a7a" stroke-width="0.5"/><line x1="28.8" y1="203.34" x2="28.8" y2="205.34" stroke="#4a5a7a" stroke-width="0.5"/><line x1="30.8" y1="204.34" x2="35.2" y2="204.34" stroke="#c8c8c8" stroke-width="0.5"/><rect x="27.0" y="210.02999999999997" width="3.6" height="3.6" fill="#e2e7ee" stroke="#a4aeba" stroke-width="0.45"/><line x1="27.8" y1="211.82999999999998" x2="29.8" y2="211.82999999999998" stroke="#4a5a7a" stroke-width="0.5"/><line x1="28.8" y1="210.82999999999998" x2="28.8" y2="212.82999999999998" stroke="#4a5a7a" stroke-width="0.5"/><line x1="30.8" y1="211.82999999999998" x2="35.2" y2="211.82999999999998" stroke="#c8c8c8" stroke-width="0.5"/><rect x="27.0" y="217.51999999999998" width="3.6" height="3.6" fill="#e2e7ee" stroke="#a4aeba" stroke-width="0.45"/><line x1="27.8" y1="219.32" x2="29.8" y2="219.32" stroke="#4a5a7a" stroke-width="0.5"/><line x1="28.8" y1="218.32" x2="28.8" y2="220.32" stroke="#4a5a7a" stroke-width="0.5"/><line x1="30.8" y1="219.32" x2="35.2" y2="219.32" stroke="#c8c8c8" stroke-width="0.5"/><rect x="27.0" y="225.01" width="3.6" height="3.6" fill="#e2e7ee" stroke="#a4aeba" stroke-width="0.45"/><line x1="27.8" y1="226.81" x2="29.8" y2="226.81" stroke="#4a5a7a" stroke-width="0.5"/><line x1="28.8" y1="225.81" x2="28.8" y2="227.81" stroke="#4a5a7a" stroke-width="0.5"/><line x1="30.8" y1="226.81" x2="35.2" y2="226.81" stroke="#c8c8c8" stroke-width="0.5"/><rect x="27.0" y="232.5" width="3.6" height="3.6" fill="#e2e7ee" stroke="#a4aeba" stroke-width="0.45"/><line x1="27.8" y1="234.3" x2="29.8" y2="234.3" stroke="#4a5a7a" stroke-width="0.5"/><line x1="30.8" y1="234.3" x2="35.2" y2="234.3" stroke="#c8c8c8" stroke-width="0.5"/><line x1="38" y1="241.79" x2="43.5" y2="241.79" stroke="#c8c8c8" stroke-width="0.5"/><line x1="38" y1="249.28" x2="43.5" y2="249.28" stroke="#c8c8c8" stroke-width="0.5"/><line x1="38" y1="256.77" x2="43.5" y2="256.77" stroke="#c8c8c8" stroke-width="0.5"/><line x1="38" y1="264.26" x2="43.5" y2="264.26" stroke="#c8c8c8" stroke-width="0.5"/><line x1="38" y1="271.75" x2="43.5" y2="271.75" stroke="#c8c8c8" stroke-width="0.5"/><line x1="38" y1="279.24" x2="43.5" y2="279.24" stroke="#c8c8c8" stroke-width="0.5"/><line x1="38" y1="286.73" x2="43.5" y2="286.73" stroke="#c8c8c8" stroke-width="0.5"/><line x1="38" y1="294.22" x2="43.5" y2="294.22" stroke="#c8c8c8" stroke-width="0.5"/><line x1="38" y1="301.71000000000004" x2="43.5" y2="301.71000000000004" stroke="#c8c8c8" stroke-width="0.5"/><line x1="38" y1="309.20000000000005" x2="43.5" y2="309.20000000000005" stroke="#c8c8c8" stroke-width="0.5"/><line x1="38" y1="316.69" x2="43.5" y2="316.69" stroke="#c8c8c8" stroke-width="0.5"/><rect x="18.7" y="322.38" width="3.6" height="3.6" fill="#e2e7ee" stroke="#a4aeba" stroke-width="0.45"/><line x1="19.5" y1="324.18" x2="21.5" y2="324.18" stroke="#4a5a7a" stroke-width="0.5"/><line x1="20.5" y1="323.18" x2="20.5" y2="325.18" stroke="#4a5a7a" stroke-width="0.5"/><line x1="22.5" y1="324.18" x2="27.0" y2="324.18" stroke="#c8c8c8" stroke-width="0.5"/><rect x="18.7" y="329.87" width="3.6" height="3.6" fill="#e2e7ee" stroke="#a4aeba" stroke-width="0.45"/><line x1="19.5" y1="331.67" x2="21.5" y2="331.67" stroke="#4a5a7a" stroke-width="0.5"/><line x1="20.5" y1="330.67" x2="20.5" y2="332.67" stroke="#4a5a7a" stroke-width="0.5"/><line x1="22.5" y1="331.67" x2="27.0" y2="331.67" stroke="#c8c8c8" stroke-width="0.5"/><rect x="10.399999999999999" y="337.35999999999996" width="3.6" height="3.6" fill="#e2e7ee" stroke="#a4aeba" stroke-width="0.45"/><line x1="11.2" y1="339.15999999999997" x2="13.2" y2="339.15999999999997" stroke="#4a5a7a" stroke-width="0.5"/><line x1="12.2" y1="338.15999999999997" x2="12.2" y2="340.15999999999997" stroke="#4a5a7a" stroke-width="0.5"/><line x1="14.2" y1="339.15999999999997" x2="18.7" y2="339.15999999999997" stroke="#c8c8c8" stroke-width="0.5"/><rect x="10.399999999999999" y="344.85" width="3.6" height="3.6" fill="#e2e7ee" stroke="#a4aeba" stroke-width="0.45"/><line x1="11.2" y1="346.65000000000003" x2="13.2" y2="346.65000000000003" stroke="#4a5a7a" stroke-width="0.5"/><line x1="12.2" y1="345.65000000000003" x2="12.2" y2="347.65000000000003" stroke="#4a5a7a" stroke-width="0.5"/><line x1="14.2" y1="346.65000000000003" x2="18.7" y2="346.65000000000003" stroke="#c8c8c8" stroke-width="0.5"/><rect x="10.399999999999999" y="352.34" width="3.6" height="3.6" fill="#e2e7ee" stroke="#a4aeba" stroke-width="0.45"/><line x1="11.2" y1="354.14" x2="13.2" y2="354.14" stroke="#4a5a7a" stroke-width="0.5"/><line x1="12.2" y1="353.14" x2="12.2" y2="355.14" stroke="#4a5a7a" stroke-width="0.5"/><line x1="14.2" y1="354.14" x2="18.7" y2="354.14" stroke="#c8c8c8" stroke-width="0.5"/><rect x="8.7" y="358.43" width="6.6" height="6.4" fill="#7d858f"/><rect x="9.6" y="359.33" width="4.8" height="4.6" fill="#dfe3e7"/><rect x="10.3" y="360.13" width="3.4" height="3" fill="none" stroke="#6a727c" stroke-width="0.5"/><line x1="5" y1="361.63" x2="8.5" y2="361.63" stroke="#c8c8c8" stroke-width="0.5"/><rect x="2.0999999999999996" y="367.32" width="3.6" height="3.6" fill="#e2e7ee" stroke="#a4aeba" stroke-width="0.45"/><line x1="2.9" y1="369.12" x2="4.9" y2="369.12" stroke="#4a5a7a" stroke-width="0.5"/><line x1="5.9" y1="369.12" x2="8.5" y2="369.12" stroke="#c8c8c8" stroke-width="0.5"/><rect x="8.7" y="366.12" width="6.6" height="6" fill="#eef0f2" stroke="#6a727c" stroke-width="0.6"/><rect x="8.7" y="366.12" width="6.6" height="1.6" fill="#6a727c"/><path d="M8.7 369.12 h6.6 M11.5 367.62 v4.5" stroke="#8a929c" stroke-width="0.4"/><rect x="2.0999999999999996" y="374.81" width="3.6" height="3.6" fill="#e2e7ee" stroke="#a4aeba" stroke-width="0.45"/><line x1="2.9" y1="376.61" x2="4.9" y2="376.61" stroke="#4a5a7a" stroke-width="0.5"/><line x1="3.9" y1="375.61" x2="3.9" y2="377.61" stroke="#4a5a7a" stroke-width="0.5"/><line x1="5.9" y1="376.61" x2="8.5" y2="376.61" stroke="#c8c8c8" stroke-width="0.5"/><rect x="8.7" y="373.61" width="6.6" height="6" fill="#eef0f2" stroke="#6a727c" stroke-width="0.6"/><rect x="9.5" y="374.41" width="3" height="2.2" fill="#8a929c"/><rect x="12.5" y="376.61" width="2.5" height="2.5" fill="#6a727c"/><rect x="2.0999999999999996" y="382.3" width="3.6" height="3.6" fill="#e2e7ee" stroke="#a4aeba" stroke-width="0.45"/><line x1="2.9" y1="384.1" x2="4.9" y2="384.1" stroke="#4a5a7a" stroke-width="0.5"/><line x1="5.9" y1="384.1" x2="8.5" y2="384.1" stroke="#c8c8c8" stroke-width="0.5"/><rect x="9" y="381.1" width="6" height="6" fill="#f4f5f6" stroke="#5a626c" stroke-width="0.7"/><path d="M10.5 382.3 v2 h3" fill="none" stroke="#5a626c" stroke-width="0.6"/><rect x="2.0999999999999996" y="389.79" width="3.6" height="3.6" fill="#e2e7ee" stroke="#a4aeba" stroke-width="0.45"/><line x1="2.9" y1="391.59000000000003" x2="4.9" y2="391.59000000000003" stroke="#4a5a7a" stroke-width="0.5"/><line x1="3.9" y1="390.59000000000003" x2="3.9" y2="392.59000000000003" stroke="#4a5a7a" stroke-width="0.5"/><line x1="5.9" y1="391.59000000000003" x2="8.5" y2="391.59000000000003" stroke="#c8c8c8" stroke-width="0.5"/><path d="M10.5 388.59000000000003 h-1.5 v6 h1.5 M13.5 388.59000000000003 h1.5 v6 h-1.5" fill="none" stroke="#5a626c" stroke-width="0.7"/><path d="M10.8 389.79 l2.4 3.6 M10.8 393.39000000000004 v-3.6 M13.2 389.79 v3.6" stroke="#6a727c" stroke-width="0.5"/><line x1="4" y1="394.08" x2="4" y2="399.08" stroke="#c8c8c8" stroke-width="0.5"/><line x1="4" y1="399.08" x2="9" y2="399.08" stroke="#c8c8c8" stroke-width="0.5"/><ellipse cx="11" cy="399.38" rx="1.8" ry="1.1" fill="none" stroke="#d9a21a" stroke-width="0.9"/><ellipse cx="14" cy="399.38" rx="1.8" ry="1.1" fill="none" stroke="#d9a21a" stroke-width="0.9"/></svg>
<div class="r" style="left:0px;top:457px;width:142px;height:6px;background:#f0f0f0;"></div>
<div class="r" style="left:7.5px;top:457.3px;width:126px;height:5.4px;background:#cdcdcd;"></div>
<svg class="r" style="left:2px;top:458px;" width="4" height="4" viewBox="0 0 4 4"><path d="M2.5 0.5 l-1.5 1.5 l1.5 1.5" fill="none" stroke="#444" stroke-width="0.7"/></svg>
<svg class="r" style="left:136.5px;top:458px;" width="4" height="4" viewBox="0 0 4 4"><path d="M1 0.5 l1.5 1.5 l-1.5 1.5" fill="none" stroke="#444" stroke-width="0.7"/></svg>
<div class="r" style="left:0px;top:463px;width:143px;height:9.5px;background:#d6d6d6;"></div>
<div class="r" style="left:0.5px;top:463.5px;width:49px;height:8.5px;background:#f7f7f7;border:0.5px solid #c4c4c4;box-sizing:border-box"></div>
<div class="t" style="left:2.00px;top:466.17px;font-size:5px;line-height:5px;color:#444;">Projektbrowser - xxx</div>
<div class="t" style="left:53.40px;top:466.17px;font-size:5px;line-height:5px;color:#444;">Eigenschaften</div>
<div class="r" style="left:143px;top:72px;width:657px;height:8px;background:#cfcfcf;"></div>
<div class="r" style="left:143px;top:80px;width:650px;height:385px;background:#ffffff;"></div>
<div class="r" style="left:401.7px;top:71.8px;width:58.5px;height:8.5px;background:#ffffff;"></div>
<div class="t" style="left:154.60px;top:74.07px;font-size:5px;line-height:5px;color:#444;transform-origin:0 0;transform:scaleX(1.0526);">--- - Projektinfo</div>
<div class="t" style="left:211.00px;top:74.07px;font-size:5px;line-height:5px;color:#444;transform-origin:0 0;transform:scaleX(0.8943);">-0,100_RDOK_01_FU</div>
<div class="t" style="left:276.70px;top:74.07px;font-size:5px;line-height:5px;color:#444;transform-origin:0 0;transform:scaleX(0.8786);">0,000_108_FBOK_00_EG</div>
<div class="t" style="left:349.50px;top:74.07px;font-size:5px;line-height:5px;color:#444;transform-origin:0 0;transform:scaleX(0.8939);">2,500_ADUK_00_EG</div>
<div class="t" style="left:413.70px;top:74.07px;font-size:5px;line-height:5px;color:#222;transform-origin:0 0;transform:scaleX(1.0277);">Fußo und AgDe</div>
<div class="t" style="left:471.70px;top:74.07px;font-size:5px;line-height:5px;color:#444;transform-origin:0 0;transform:scaleX(1.0435);">--- - Projektinfo</div>
<svg class="r" style="left:143px;top:72px;" width="657" height="8" viewBox="0 0 657 8"><rect x="2.5" y="1.8" width="6" height="5.5" fill="#e8e8e8" stroke="#8a8f96" stroke-width="0.6"/><path d="M3.5 3 l4 3" stroke="#b0b5bb" stroke-width="0.6"/><rect x="59.19999999999999" y="1.8" width="5.5" height="5.5" fill="#f6f6f6" stroke="#8a8f96" stroke-width="0.6"/><path d="M60.19999999999999 3.2 h2" stroke="#8a8f96" stroke-width="0.6"/><rect x="125.5" y="1.8" width="5.5" height="5.5" fill="#f6f6f6" stroke="#8a8f96" stroke-width="0.6"/><path d="M126.5 3.2 h2" stroke="#8a8f96" stroke-width="0.6"/><rect x="197.5" y="1.8" width="5.5" height="5.5" fill="#f6f6f6" stroke="#8a8f96" stroke-width="0.6"/><path d="M198.5 3.2 h2" stroke="#8a8f96" stroke-width="0.6"/><path d="M261.5 3.2 L264.2 1.2 L266.9 3.2 L266.6 6.5 L264.2 7.3 L261.8 6.5 Z" fill="#6e7683" stroke="#5a616c" stroke-width="0.4"/><path d="M262.8 3.4 L264.2 2.4 L265.6 3.4 L264.2 4.3 Z" fill="#e8ecf0"/><rect x="263.7" y="4.6" width="1.1" height="2.2" fill="#d8dde3"/><rect x="320.5" y="1.8" width="6" height="5.5" fill="#e8e8e8" stroke="#8a8f96" stroke-width="0.6"/><path d="M321.5 3 l4 3" stroke="#b0b5bb" stroke-width="0.6"/><path d="M312.7 4.5 l2 2 M314.7 4.5 l-2 2 M312.7 4.5" stroke="#222" stroke-width="0"/><path d="M311.2 3.3 l3 3 M314.2 3.3 l-3 3" stroke="#222" stroke-width="0.8"/><path d="M-1 0" /></svg>
<svg class="r" style="left:136px;top:72px;" width="8" height="8" viewBox="0 0 8 8"></svg>
<svg class="r" style="left:775px;top:72px;" width="25" height="8" viewBox="0 0 25 8"><path d="M20.5 3.2 h3 l-1.5 1.8 z" fill="#333"/><rect x="20.5" y="2.4" width="3" height="0.5" fill="#333"/></svg>
<div class="r" style="left:793px;top:80px;width:7px;height:386px;background:#f0f0f0;"></div>
<div class="r" style="left:793px;top:269.7px;width:7px;height:7.2px;background:#cdcdcd;"></div>
<svg class="r" style="left:793px;top:80px;" width="7" height="386" viewBox="0 0 7 386"><path d="M1.8 6 l1.7 -1.7 l1.7 1.7" fill="none" stroke="#333" stroke-width="0.7"/><path d="M1.8 380.3 l1.7 1.7 l1.7 -1.7" fill="none" stroke="#333" stroke-width="0.7"/></svg>
<div class="r" style="left:143px;top:465px;width:650px;height:7px;background:#f0f0f0;"></div>
<div class="r" style="left:546px;top:466px;width:7.5px;height:5.5px;background:#cdcdcd;"></div>
<svg class="r" style="left:787px;top:466px;" width="6" height="6" viewBox="0 0 6 6"><path d="M1.5 1 l1.5 1.5 l-1.5 1.5" fill="none" stroke="#444" stroke-width="0.7"/></svg>
<div class="r" style="left:793px;top:466px;width:7px;height:6px;background:#f0f0f0;"></div>
<div class="t" style="left:154.00px;top:466.25px;font-size:4.9px;line-height:4.9px;color:#333;">1 : 100</div>
<svg class="r" style="left:170px;top:464px" width="150" height="9" viewBox="0 0 150 9"><rect x="6.5" y="1.5" width="6" height="5" fill="none" stroke="#555" stroke-width="0.7"/><rect x="7.7" y="3" width="3.6" height="2" fill="#777"/><rect x="15.5" y="2.5" width="5.5" height="4.5" fill="none" stroke="#666" stroke-width="0.7"/><path d="M15.5 2.5 l1.5 -1.2 h5 v4.5 l-1 1" fill="none" stroke="#666" stroke-width="0.6"/><circle cx="27" cy="4" r="2.3" fill="#f5c518"/><path d="M27 4 l3 3 M30 4 l-3 3" stroke="#e2231a" stroke-width="0.9"/><circle cx="35.0" cy="3.5" r="1.5" fill="none" stroke="#bbb" stroke-width="0.5"/><path d="M32.5 7 l3 -2 l3 2" fill="none" stroke="#ccc" stroke-width="0.6"/><path d="M41 5 a2 2 0 0 1 3 -2 a2 2 0 0 1 3 1.5 l-1 2.5" fill="none" stroke="#666" stroke-width="0.7"/><circle cx="46" cy="5.5" r="1.3" fill="#2f7ed8"/><path d="M50 4 h6" stroke="#2f6fc8" stroke-width="1.4"/><path d="M51.5 6 l3.5 -3.5 M51.5 2.5 l3.5 3.5" stroke="#e2231a" stroke-width="0.9"/><path d="M59 4 h6" stroke="#2f6fc8" stroke-width="1.4"/><path d="M60 2.5 h4 M60 6 h4" stroke="#2f6fc8" stroke-width="0.7"/><rect x="67.5" y="1.2" width="5.5" height="6.5" fill="#d5d9de" stroke="#555" stroke-width="0.6"/><rect x="70.0" y="4" width="3" height="3" fill="#3a8a3a"/><path d="M76 4 q3 -3 6 0 q-3 3 -6 0" fill="none" stroke="#555" stroke-width="0.7"/><circle cx="79" cy="4" r="0.8" fill="#2f7ed8"/><path d="M87.0 2 a1.5 1.5 0 1 1 0.1 0 M87.0 3 v4" stroke="#2f7ed8" stroke-width="0.9" fill="none"/><circle cx="95.5" cy="4" r="2.3" fill="#4a8ad0"/><path d="M95.5 2.5 l3 3 M98.5 2.5 l-3 3" stroke="#e2231a" stroke-width="0.9"/><rect x="101.5" y="1.5" width="5.5" height="5" fill="none" stroke="#444" stroke-width="0.7"/><path d="M104.5 4 l2.5 2.5 M107.0 4 l-2.5 2.5" stroke="#222" stroke-width="0.6"/><rect x="110.5" y="1.5" width="5.5" height="5.5" fill="#e2e2e2"/><path d="M119 6.5 v-3 a3 3 0 0 1 6 0 v3 z" fill="#888"/><rect x="120.5" y="3.5" width="3" height="3" fill="#eee"/><rect x="127" y="2" width="6.5" height="1" fill="#444"/><rect x="127" y="2" width="1" height="5" fill="#444"/><circle cx="131.5" cy="5.5" r="1.4" fill="#555"/><path d="M137.5 2.5 l-1.5 1.5 l1.5 1.5" fill="none" stroke="#333" stroke-width="0.7"/></svg>
<div class="r" style="left:0px;top:472.5px;width:800px;height:10.5px;background:#d4d4d4;"></div>
<div class="t" style="left:1.80px;top:477.05px;font-size:4.9px;line-height:4.9px;color:#222;transform-origin:0 0;transform:scaleX(0.9856);">Zur Auswahl klicken, TABULATOR für andere Auswahl, STRG zum Hinzufügen, UMSCHALT zum Aufheben der Auswahl.</div>
<svg class="r" style="left:346px;top:474px;" width="8" height="9" viewBox="0 0 8 9"><rect x="2" y="0.5" width="5" height="4" fill="#4caf50"/><rect x="0.5" y="3" width="5" height="5.5" fill="#3a7cc8"/><rect x="1.5" y="4" width="3" height="3.5" fill="#bcd"/></svg>
<div class="r" style="left:357px;top:474.7px;width:87px;height:8.3px;background:#ffffff;border:0.5px solid #b8b8b8;box-sizing:border-box"></div>
<div class="t" style="left:359.00px;top:476.37px;font-size:5px;line-height:5px;color:#222;">200_Rohbau</div>
<svg class="r" style="left:437px;top:477px;" width="4" height="3" viewBox="0 0 4 3"><path d="M0.5 0.5 l1.5 1.5 l1.5 -1.5" fill="none" stroke="#555" stroke-width="0.6"/></svg>
<svg class="r" style="left:447px;top:474.5px;" width="12" height="8" viewBox="0 0 12 8"><rect x="0.5" y="0.5" width="5" height="3.5" fill="none" stroke="#555" stroke-width="0.7"/><path d="M3 4 v3.5" stroke="#555" stroke-width="0.8"/><text x="6" y="7" font-family="Liberation Sans" font-size="4" fill="#555">:0</text></svg>
<svg class="r" style="left:469px;top:474.5px;" width="18" height="8" viewBox="0 0 18 8"><rect x="0.5" y="0.8" width="6.5" height="6.5" fill="#fff" stroke="#667" stroke-width="0.6"/><rect x="0.5" y="0.8" width="6.5" height="1.6" fill="#889"/><rect x="11" y="1" width="5" height="6" fill="#ccc"/></svg>
<div class="r" style="left:490px;top:474.5px;width:85.5px;height:8px;background:#ffffff;border:0.5px solid #c4c4c4;box-sizing:border-box"></div>
<div class="t" style="left:492.00px;top:476.37px;font-size:5px;line-height:5px;color:#999;">Basisvorlage</div>
<svg class="r" style="left:570.5px;top:477px;" width="4" height="3" viewBox="0 0 4 3"><path d="M0.5 0.5 l1.5 1.5 l1.5 -1.5" fill="none" stroke="#777" stroke-width="0.6"/></svg>
<div class="r" style="left:643.5px;top:474.8px;width:5.5px;height:6.5px;background:#ffffff;border:0.5px solid #8a8a8a;box-sizing:border-box"></div>
<div class="t" style="left:650.30px;top:476.25px;font-size:4.9px;line-height:4.9px;color:#222;">Nur bearbeitbar</div>
<svg class="r" style="left:0px;top:473px" width="800" height="10" viewBox="0 0 800 10"><path d="M690.5 2.5 h6.5 v2.5 l-1.5 2.5 h-3.5 l-1.5 -2.5 z" fill="#f0c419" stroke="#6a5a20" stroke-width="0.45"/><rect x="692.5" y="7.5" width="2.5" height="1.3" fill="#888"/><path d="M701.5 8 l5 -5 v5 z" fill="#4a8ad0"/><path d="M705 1.8 l2.5 2.5 M707.5 1.8 l-2.5 2.5" stroke="#e2231a" stroke-width="0.9"/><rect x="701.5" y="8" width="6" height="0.7" fill="#555"/><rect x="712.5" y="3.5" width="6" height="4.5" fill="#f39c5a"/><rect x="714" y="5" width="3" height="2" fill="#e9c060"/><path d="M716 1.8 l2.5 2.5 M718.5 1.8 l-2.5 2.5" stroke="#e2231a" stroke-width="0.9"/><rect x="723" y="3" width="5" height="5.5" fill="#4a8ad0"/><rect x="724" y="4" width="2.5" height="3.5" fill="#bcd4ee"/><path d="M727 1.8 l2.5 2.5 M729.5 1.8 l-2.5 2.5" stroke="#e2231a" stroke-width="0.9"/><path d="M734.5 2 v4 M733.3 3.2 l1.2 -1.2 l1.2 1.2 M736.5 4.5 l3.5 3.5 l0.5 -2 l1 -0.5 z" stroke="#333" stroke-width="0.8" fill="none"/><circle cx="747.5" cy="5" r="2.3" fill="none" stroke="#b5b5b5" stroke-width="0.8"/><path d="M754 2 h7 l-2.7 3.3 v3.2 l-1.6 -1 v-2.2 z" fill="#f4f4f4" stroke="#555" stroke-width="0.6"/><text x="761.5" y="8.3" font-family="Liberation Sans" font-size="4.5" fill="#444">:0</text></svg>
<svg class="r" style="left:0;top:0" width="800" height="483" viewBox="0 0 800 483"><defs><clipPath id="cp"><polygon points="221.00,281.50 450.70,216.40 615.20,261.00 385.50,326.10"/></clipPath></defs><polygon points="221.00,306.00 450.70,240.90 615.20,285.50 385.50,350.60" fill="#fcfc80" stroke="#2a2a12" stroke-width="0.9"/><line x1="327.35" y1="275.86" x2="391.51" y2="293.25" stroke="#262614" stroke-width="1.0"/><line x1="285.15" y1="323.39" x2="514.86" y2="258.29" stroke="#262614" stroke-width="1.0"/><line x1="302.76" y1="328.17" x2="458.72" y2="283.96" stroke="#262614" stroke-width="1.0"/><line x1="458.72" y1="283.96" x2="541.47" y2="306.40" stroke="#262614" stroke-width="1.0"/><line x1="478.87" y1="278.34" x2="532.62" y2="263.11" stroke="#262614" stroke-width="1.0"/><line x1="478.87" y1="278.34" x2="519.50" y2="289.36" stroke="#262614" stroke-width="1.0"/><line x1="499.52" y1="295.02" x2="573.25" y2="274.13" stroke="#262614" stroke-width="1.0"/><line x1="374.65" y1="307.79" x2="457.40" y2="330.22" stroke="#262614" stroke-width="1.0"/><polygon points="221.00,281.50 450.70,216.40 615.20,261.00 385.50,326.10" fill="#ffb8ff"/><polygon points="265.18,293.48 450.78,240.88 571.10,273.50 385.50,326.10" fill="#fccc9c"/><g clip-path="url(#cp)"><line x1="327.35" y1="275.86" x2="391.51" y2="293.25" stroke="#6e3a6e" stroke-width="1.05"/><line x1="285.15" y1="323.39" x2="514.86" y2="258.29" stroke="#6e3a6e" stroke-width="1.05"/><line x1="302.76" y1="328.17" x2="458.72" y2="283.96" stroke="#6e3a6e" stroke-width="1.05"/><line x1="458.72" y1="283.96" x2="541.47" y2="306.40" stroke="#6e3a6e" stroke-width="1.05"/><line x1="478.87" y1="278.34" x2="532.62" y2="263.11" stroke="#6e3a6e" stroke-width="1.05"/><line x1="478.87" y1="278.34" x2="519.50" y2="289.36" stroke="#6e3a6e" stroke-width="1.05"/><line x1="499.52" y1="295.02" x2="573.25" y2="274.13" stroke="#6e3a6e" stroke-width="1.05"/><line x1="374.65" y1="307.79" x2="457.40" y2="330.22" stroke="#6e3a6e" stroke-width="1.05"/><polygon points="221.00,306.00 450.70,240.90 615.20,285.50 385.50,350.60" fill="none" stroke="#9a5a9a" stroke-width="0.8"/></g><polygon points="221.00,281.50 450.70,216.40 615.20,261.00 385.50,326.10" fill="none" stroke="#2a182a" stroke-width="0.9"/><line x1="327.35" y1="251.36" x2="391.51" y2="268.75" stroke="#2a1a2a" stroke-width="1.1"/><line x1="285.15" y1="298.89" x2="514.86" y2="233.79" stroke="#2a1a2a" stroke-width="1.1"/><line x1="302.76" y1="303.67" x2="458.72" y2="259.46" stroke="#2a1a2a" stroke-width="1.1"/><line x1="458.72" y1="259.46" x2="541.47" y2="281.90" stroke="#2a1a2a" stroke-width="1.1"/><line x1="478.87" y1="253.84" x2="532.62" y2="238.61" stroke="#2a1a2a" stroke-width="1.1"/><line x1="478.87" y1="253.84" x2="519.50" y2="264.86" stroke="#2a1a2a" stroke-width="1.1"/><line x1="499.52" y1="270.52" x2="573.25" y2="249.63" stroke="#2a1a2a" stroke-width="1.1"/><line x1="374.65" y1="283.29" x2="457.40" y2="305.72" stroke="#2a1a2a" stroke-width="1.1"/></svg>
<svg class="r" style="left:680px;top:80px" width="113" height="120" viewBox="0 0 113 120">
<defs><radialGradient id="sh" cx="0.5" cy="0.5" r="0.5"><stop offset="0" stop-color="#e6e6e6"/><stop offset="1" stop-color="#ffffff"/></radialGradient></defs>
<ellipse cx="75.7" cy="50.7" rx="26" ry="8.8" fill="none" stroke="#f0f0f0" stroke-width="2.6"/>
<ellipse cx="75.7" cy="50.7" rx="27.3" ry="10.1" fill="none" stroke="#c4c4c4" stroke-width="0.45"/>
<ellipse cx="75.7" cy="50.7" rx="24.6" ry="7.6" fill="none" stroke="#cdcdcd" stroke-width="0.4"/>
<ellipse cx="75.5" cy="49" rx="17" ry="5" fill="url(#sh)"/>
<path d="M60.8 28.8 L74.8 26.5 L89.7 28.4 L75.3 31.9 Z" fill="#f2f2f2" stroke="#c4c4c4" stroke-width="0.4"/>
<defs><linearGradient id="lf" x1="0" y1="0" x2="0" y2="1"><stop offset="0" stop-color="#f4f4f4"/><stop offset="1" stop-color="#d9d9d9"/></linearGradient><linearGradient id="rf" x1="0" y1="0" x2="0" y2="1"><stop offset="0" stop-color="#f6f6f6"/><stop offset="1" stop-color="#e0e0e0"/></linearGradient></defs><path d="M60.8 28.8 L75.3 31.9 L75.3 52.6 L61.3 47 Z" fill="url(#lf)" stroke="#bdbdbd" stroke-width="0.45"/>
<path d="M75.3 31.9 L89.7 28.4 L89.2 46.5 L75.3 52.6 Z" fill="url(#rf)" stroke="#bdbdbd" stroke-width="0.45"/>
<text x="0" y="0" font-family="Liberation Sans" font-size="5.6" fill="#808080" textLength="9.2" lengthAdjust="spacingAndGlyphs" transform="translate(63.8 41.2) skewY(13)">LINKS</text>
<text x="0" y="0" font-family="Liberation Sans" font-size="5.6" fill="#808080" textLength="10.8" lengthAdjust="spacingAndGlyphs" transform="translate(77.2 45) skewY(-24)">VORNE</text>
<text x="70" y="30.3" font-family="Liberation Sans" font-size="2.5" fill="#bbb" transform="rotate(-5 70 30.3)">OBEN</text>
<text x="52.5" y="59" font-family="Liberation Sans" font-size="2.2" fill="#aaa" transform="rotate(20 52.5 59)">S</text>
<text x="94" y="57.5" font-family="Liberation Sans" font-size="2.2" fill="#aaa" transform="rotate(-20 94 57.5)">O</text>
<rect x="98.3" y="72.4" width="14.2" height="48.4" rx="2.2" fill="#f9f9f9" stroke="#c6c6c6" stroke-width="0.6"/>
<circle cx="109.2" cy="75.4" r="0.9" fill="none" stroke="#999" stroke-width="0.5"/>
<circle cx="109.2" cy="117.6" r="0.9" fill="none" stroke="#999" stroke-width="0.5"/>
<path d="M101.8 82 q3.4 -1.6 6.8 0 v5 q-1 3 -3.4 4 q-2.4 -1 -3.4 -4 z" fill="#eeeeee" stroke="#9a9a9a" stroke-width="0.6"/>
<path d="M103.5 83.5 h3.4 v3.5 q-1.7 1.5 -3.4 0 z" fill="#fafafa" stroke="#a0a0a0" stroke-width="0.45"/>
<path d="M104.6 93.1 h1.3 l-0.65 0.8 z" fill="#666"/>
<rect x="99.5" y="95.9" width="11.5" height="0.5" fill="#cfcfcf"/>
<rect x="102.2" y="100" width="4" height="4" fill="#8fc67a"/><circle cx="107" cy="104.6" r="1.3" fill="none" stroke="#555" stroke-width="0.5"/><path d="M107.9 105.5 l1 1" stroke="#555" stroke-width="0.6"/>
<path d="M104.6 111 h1.3 l-0.65 0.8 z" fill="#666"/>
</svg>
</body></html>
